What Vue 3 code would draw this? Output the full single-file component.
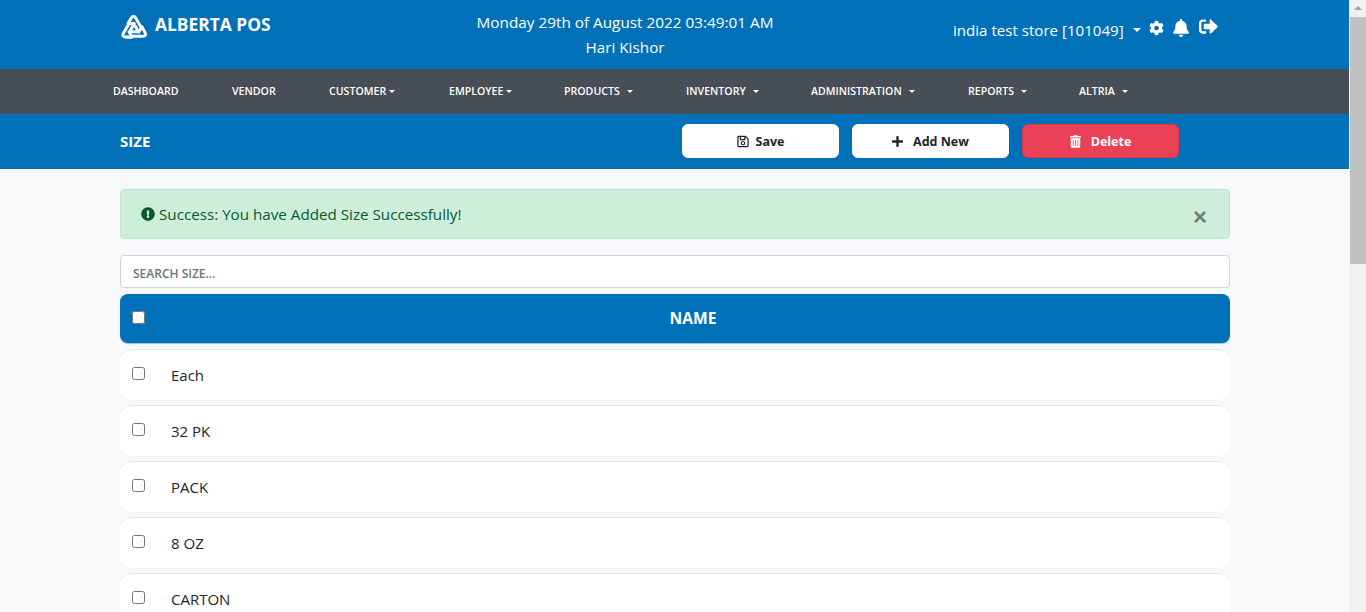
<template>
  <div class="page">
    <div class="main">
      <header class="top">
        <div class="brand">
          <svg class="logo" viewBox="0 0 26 26">
            <path v-for="a in [0, 120, 240]" :key="a" d="M8.6 9.6 L3.4 18.4 Q1.2 22.4 5.8 22.4 H11.2 L8.4 17.4 H15" :transform="`rotate(${a} 13 15)`" />
          </svg>
          <span class="brand-name">ALBERTA POS</span>
        </div>
        <div class="clock">
          <div>Monday 29th of August 2022 03:49:01 AM</div>
          <div class="user">Hari Kishor</div>
        </div>
        <div class="store">
          <span class="store-name">india test store [101049]</span>
          <i class="caret big"></i>
          <svg class="ic-cog" viewBox="0 0 512 512"><path :d="icons.cog" /></svg>
          <svg class="ic-bell" viewBox="0 0 448 512"><path :d="icons.bell" /></svg>
          <svg class="ic-out" viewBox="0 0 512 512"><path :d="icons.signOut" /></svg>
        </div>
      </header>

      <nav class="nav">
        <a v-for="item in navItems" :key="item.label" class="nav-link" :style="{ width: item.width + 'px' }">
          {{ item.label }}<i v-if="item.caret" class="caret" :class="{ spaced: item.spaced }"></i>
        </a>
      </nav>

      <div class="toolbar">
        <div class="title">SIZE</div>
        <div class="actions">
          <button class="btn">
            <svg class="ic-btn" viewBox="0 0 448 512"><path :d="icons.save" /></svg>Save
          </button>
          <button class="btn">
            <svg class="ic-plus" viewBox="0 0 448 512"><path :d="icons.plus" /></svg>Add New
          </button>
          <button class="btn danger">
            <svg class="ic-trash" viewBox="0 0 448 512"><path :d="icons.trash" /></svg>Delete
          </button>
        </div>
      </div>

      <section class="content">
        <div class="alert">
          <span class="alert-text">
            <svg class="ic-alert" viewBox="0 0 512 512"><path :d="icons.alert" /></svg>Success: You have Added Size Successfully!
          </span>
          <span class="close">×</span>
        </div>
        <input class="search" type="text" placeholder="SEARCH SIZE..." />
        <div class="thead">
          <input type="checkbox" class="check" />
          <div class="th-name">NAME</div>
        </div>
        <div v-for="row in rows" :key="row" class="row">
          <input type="checkbox" class="check" />
          <span class="row-name">{{ row }}</span>
        </div>
      </section>
    </div>

    <aside class="scrollbar">
      <div class="sb-arrow"></div>
      <div class="sb-thumb"></div>
    </aside>
  </div>
</template>

<script setup>
const navItems = [
  { label: 'DASHBOARD', width: 119 },
  { label: 'VENDOR', width: 97 },
  { label: 'CUSTOMER', caret: true, width: 120 },
  { label: 'EMPLOYEE', caret: true, width: 115 },
  { label: 'PRODUCTS', caret: true, spaced: true, width: 122 },
  { label: 'INVENTORY', caret: true, spaced: true, width: 125 },
  { label: 'ADMINISTRATION', caret: true, spaced: true, width: 157 },
  { label: 'REPORTS', caret: true, spaced: true, width: 111 },
  { label: 'ALTRIA', caret: true, spaced: true, width: 80 }
]

const rows = ['Each', '32 PK', 'PACK', '8 OZ', 'CARTON']

const icons = {
  cog: 'M487.4 315.7l-42.6-24.6c4.3-23.2 4.3-47 0-70.2l42.6-24.6c4.9-2.8 7.1-8.6 5.5-14-11.1-35.6-30-67.8-54.7-94.6-3.8-4.1-10-5.1-14.8-2.3L380.8 110c-17.9-15.4-38.5-27.3-60.8-35.1V25.8c0-5.6-3.9-10.5-9.4-11.7-36.7-8.2-74.3-7.8-109.2 0-5.5 1.2-9.4 6.1-9.4 11.7V75c-22.2 7.9-42.8 19.8-60.8 35.1L88.7 85.5c-4.9-2.8-11-1.9-14.8 2.3-24.7 26.7-43.6 58.9-54.7 94.6-1.7 5.4.6 11.2 5.5 14L67.3 221c-4.3 23.2-4.3 47 0 70.2l-42.6 24.6c-4.9 2.8-7.1 8.6-5.5 14 11.1 35.6 30 67.8 54.7 94.6 3.8 4.1 10 5.1 14.8 2.3l42.6-24.6c17.9 15.4 38.5 27.3 60.8 35.1v49.2c0 5.6 3.9 10.5 9.4 11.7 36.7 8.2 74.3 7.8 109.2 0 5.5-1.2 9.4-6.1 9.4-11.7v-49.2c22.2-7.9 42.8-19.8 60.8-35.1l42.6 24.6c4.9 2.8 11 1.9 14.8-2.3 24.7-26.7 43.6-58.9 54.7-94.6 1.5-5.5-.7-11.3-5.6-14.1zM256 336c-44.1 0-80-35.9-80-80s35.9-80 80-80 80 35.9 80 80-35.9 80-80 80z',
  bell: 'M224 512c35.32 0 63.97-28.65 63.97-64H160.03c0 35.35 28.65 64 63.97 64zm215.39-149.71c-19.32-20.76-55.47-51.99-55.47-154.29 0-77.7-54.48-139.9-127.94-155.16V32c0-17.67-14.32-32-31.98-32s-31.98 14.33-31.98 32v20.84C118.56 68.1 64.08 130.3 64.08 208c0 102.3-36.15 133.53-55.47 154.29-6 6.45-8.66 14.16-8.61 21.71.11 16.4 12.98 32 32.1 32h383.8c19.12 0 32-15.6 32.1-32 .05-7.55-2.61-15.27-8.61-21.71z',
  signOut: 'M497 273L329 441c-15 15-41 4.5-41-17v-96H152c-13.3 0-24-10.7-24-24v-96c0-13.3 10.7-24 24-24h136V88c0-21.4 25.9-32 41-17l168 168c9.3 9.4 9.3 24.6 0 34zM192 436v-40c0-6.6-5.4-12-12-12H96c-17.7 0-32-14.3-32-32V160c0-17.7 14.3-32 32-32h84c6.6 0 12-5.4 12-12V76c0-6.6-5.4-12-12-12H96c-53 0-96 43-96 96v192c0 53 43 96 96 96h84c6.6 0 12-5.4 12-12z',
  save: 'M433.941 129.941l-83.882-83.882A48 48 0 0 0 316.118 32H48C21.49 32 0 53.49 0 80v352c0 26.51 21.49 48 48 48h352c26.51 0 48-21.49 48-48V163.882a48 48 0 0 0-14.059-33.941zM272 80v80H144V80h128zm122 352H54a6 6 0 0 1-6-6V86a6 6 0 0 1 6-6h42v104c0 13.255 10.745 24 24 24h176c13.255 0 24-10.745 24-24V83.882l78.243 78.243a6 6 0 0 1 1.757 4.243V426a6 6 0 0 1-6 6zM224 232c-48.523 0-88 39.477-88 88s39.477 88 88 88 88-39.477 88-88-39.477-88-88-88zm0 128c-22.056 0-40-17.944-40-40s17.944-40 40-40 40 17.944 40 40-17.944 40-40 40z',
  plus: 'M416 208H272V64c0-17.67-14.33-32-32-32h-32c-17.67 0-32 14.33-32 32v144H32c-17.67 0-32 14.33-32 32v32c0 17.67 14.33 32 32 32h144v144c0 17.67 14.33 32 32 32h32c17.67 0 32-14.33 32-32V304h144c17.67 0 32-14.33 32-32v-32c0-17.67-14.33-32-32-32z',
  trash: 'M32 464a48 48 0 0 0 48 48h288a48 48 0 0 0 48-48V128H32zm272-256a16 16 0 0 1 32 0v224a16 16 0 0 1-32 0zm-96 0a16 16 0 0 1 32 0v224a16 16 0 0 1-32 0zm-96 0a16 16 0 0 1 32 0v224a16 16 0 0 1-32 0zM432 32H312l-9.4-18.7A24 24 0 0 0 281.1 0H166.8a23.72 23.72 0 0 0-21.4 13.3L136 32H16A16 16 0 0 0 0 48v32a16 16 0 0 0 16 16h416a16 16 0 0 0 16-16V48a16 16 0 0 0-16-16z',
  alert: 'M504 256c0 136.997-111.043 248-248 248S8 392.997 8 256C8 119.083 119.043 8 256 8s248 111.083 248 248zm-248 50c-25.405 0-46 20.595-46 46s20.595 46 46 46 46-20.595 46-46-20.595-46-46-46zm-43.673-165.346l7.418 136c.347 6.364 5.609 11.346 11.982 11.346h48.546c6.373 0 11.635-4.982 11.982-11.346l7.418-136c.375-6.874-5.098-12.654-11.982-12.654h-63.383c-6.884 0-12.356 5.78-11.981 12.654z'
}
</script>

<style>
html, body {
  margin: 0;
  height: 612px;
  overflow: hidden;
}
</style>

<style scoped>
.page {
  display: flex;
  height: 612px;
  overflow: hidden;
  font-family: "Open Sans", "Noto Sans", sans-serif;
  background: #f8f9fa;
}
.main {
  flex: 1;
  min-width: 0;
}
svg {
  fill: currentColor;
  flex: none;
}

.top {
  height: 69px;
  box-sizing: border-box;
  background: #0071b9;
  color: #fff;
  display: grid;
  grid-template-columns: 300px 410px 1fr;
  padding-left: 120px;
}
.brand {
  display: flex;
  align-items: center;
  gap: 7px;
  height: 48px;
}
.logo {
  width: 28px;
  height: 28px;
  margin-top: 6px;
  fill: none;
  stroke: #fff;
  stroke-width: 2.8;
  stroke-linejoin: round;
  stroke-linecap: round;
}
.brand-name {
  font-size: 17.4px;
  font-weight: 700;
}
.clock {
  text-align: center;
  font-size: 15.3px;
  line-height: 25px;
  padding-top: 10px;
  white-space: nowrap;
}
.store {
  display: flex;
  align-items: center;
  padding: 0 0 8px 123px;
}
.store-name {
  font-size: 15.1px;
  white-space: nowrap;
  margin-bottom: 2px;
}
.ic-cog {
  width: 15px;
  height: 16px;
  margin: 0 0 6px 8px;
}
.ic-bell {
  width: 16px;
  height: 18px;
  margin: 0 0 6px 9px;
}
.ic-out {
  width: 19px;
  height: 19px;
  margin: 0 0 8px 10px;
}

.caret {
  display: inline-block;
  vertical-align: 2px;
  margin-left: 3px;
  border-top: 3.5px solid #fff;
  border-left: 3.5px solid transparent;
  border-right: 3.5px solid transparent;
}
.caret.spaced {
  margin-left: 7px;
}
.caret.big {
  margin: 0 0 2px 9px;
  border-top-width: 4px;
  border-left-width: 4px;
  border-right-width: 4px;
}

.nav {
  height: 45px;
  box-sizing: border-box;
  padding: 0 0 2px 113px;
  background: #484e55;
  display: flex;
  align-items: center;
}
.nav-link {
  flex: none;
  color: #fff;
  font-size: 10.6px;
  font-weight: 600;
  white-space: nowrap;
}

.toolbar {
  height: 55px;
  box-sizing: border-box;
  padding: 0 0 2px 120px;
  background: #0071b9;
  display: flex;
  align-items: center;
}
.title {
  width: 562px;
  color: #fff;
  font-size: 15px;
  font-weight: 700;
}
.actions {
  display: flex;
  gap: 13px;
}
.btn {
  width: 157px;
  height: 34px;
  border: 1px solid #fff;
  border-radius: 6px;
  background: #fff;
  color: #212529;
  font-family: inherit;
  font-size: 12.5px;
  font-weight: 700;
  display: flex;
  align-items: center;
  justify-content: center;
  padding: 1px 0 0;
}
.btn.danger {
  background: #ea4157;
  border-color: #dc3545;
  color: #fff;
}
.ic-btn {
  width: 12px;
  height: 13px;
  margin-right: 7px;
}
.ic-plus {
  width: 11px;
  height: 13px;
  margin-right: 10px;
}
.ic-trash {
  width: 11px;
  height: 13px;
  margin-right: 10px;
}

.content {
  padding: 20px 119px 0 120px;
  display: flex;
  flex-direction: column;
}
.alert {
  height: 50px;
  box-sizing: border-box;
  background: #cdeedb;
  border: 1px solid #bfe8d0;
  border-radius: 4px;
  color: #0b5a2c;
  display: flex;
  align-items: center;
  justify-content: space-between;
  padding: 0 22px 0 20px;
}
.alert-text {
  display: flex;
  align-items: center;
  font-size: 15.2px;
}
.ic-alert {
  width: 14px;
  height: 14px;
  margin-right: 4px;
}
.close {
  font-size: 24px;
  line-height: 1;
  font-weight: 700;
  color: #6f7f76;
  font-family: "Liberation Sans", sans-serif;
  padding-top: 6px;
}
.search {
  margin-top: 16px;
  height: 33px;
  box-sizing: border-box;
  border: 1px solid #ced4da;
  border-radius: 4px;
  background: #fff;
  padding: 3px 12px 0;
  font-family: inherit;
  font-size: 12px;
  font-weight: 600;
}
.search::placeholder {
  color: #6c757d;
  opacity: 1;
}
.thead {
  margin-top: 6px;
  height: 49px;
  box-sizing: border-box;
  padding: 0 0 2px 12px;
  background: #0071b9;
  border-radius: 8px;
  color: #fff;
  display: flex;
  align-items: center;
  box-shadow: 0 1px 1px rgba(0, 113, 185, 0.4);
}
.th-name {
  flex: 1;
  text-align: center;
  font-size: 15.6px;
  font-weight: 700;
  padding-left: 11px;
}
.check {
  width: 13px;
  height: 13px;
  margin: 0;
  flex: none;
}
.row {
  margin-top: 6px;
  height: 50px;
  flex: none;
  box-sizing: content-box;
  background: #fff;
  border-top: 1px solid #e4e7ea;
  border-bottom: 1px solid #f2f3f5;
  border-radius: 12px;
  display: flex;
  align-items: center;
  padding-left: 12px;
  color: #212529;
}
.row + .row {
  margin-top: 4px;
}
.row .check {
  margin-bottom: 4px;
}
.row-name {
  margin-left: 26px;
  font-size: 15px;
}

.scrollbar {
  width: 17px;
  flex: none;
  background: #f1f1f1;
}
.sb-arrow {
  height: 17px;
  position: relative;
}
.sb-arrow::after {
  content: '';
  position: absolute;
  left: 5px;
  top: 6px;
  border-bottom: 4px solid #a3a3a3;
  border-left: 4px solid transparent;
  border-right: 4px solid transparent;
}
.sb-thumb {
  height: 247px;
  margin-left: 1px;
  background: #c1c1c1;
}
</style>
